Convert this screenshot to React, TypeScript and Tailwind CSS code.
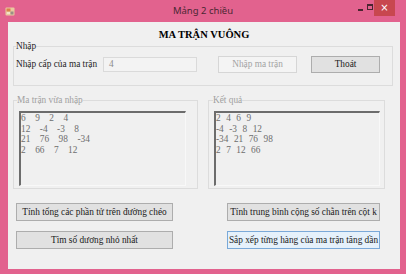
import React from "react";

function WinButton({
  children,
  className = "",
  variant = "normal",
}: {
  children: React.ReactNode;
  className?: string;
  variant?: "normal" | "disabled" | "focus";
}) {
  const styles =
    variant === "disabled"
      ? "bg-[#f4f4f4] border-[#d6d6d6] text-[#a3a3a3]"
      : variant === "focus"
      ? "bg-[#e5f1fb] border-[#7aa9d8] text-[#1a1a1a]"
      : "bg-[#e1e1e1] border-[#adadad] text-[#1a1a1a]";
  return (
    <div
      className={`flex items-center justify-center border text-[9.3px] leading-[11px] whitespace-nowrap ${styles} ${className}`}
    >
      {children}
    </div>
  );
}

function MatrixBox({ rows, gapClass, className = "" }: { rows: string[][]; gapClass: string; className?: string }) {
  return (
    <div
      className={`h-[75px] border-t-2 border-l-2 border-r border-b border-t-[#6c6c6c] border-l-[#6c6c6c] border-r-[#f8f8f8] border-b-[#f8f8f8] bg-[#f0f0f0] ${className}`}
    >
      {rows.map((r, i) => (
        <div key={i} className="flex whitespace-nowrap text-[9.3px] leading-[10.7px] text-[#6d6d6d]">
          {r.map((n, j) => (
            <span key={j} className={j < r.length - 1 ? gapClass : ""}>
              {n}
            </span>
          ))}
        </div>
      ))}
    </div>
  );
}

export default function App() {
  const left = [
    ["6", "9", "2", "4"],
    ["12", "-4", "-3", "8"],
    ["21", "76", "98", "-34"],
    ["2", "66", "7", "12"],
  ];
  const right = [
    ["2", "4", "6", "9"],
    ["-4", "-3", "8", "12"],
    ["-34", "21", "76", "98"],
    ["2", "7", "12", "66"],
  ];
  return (
    <div className="w-[406px] h-[274px] bg-[#e2628e] flex flex-col font-['Liberation_Serif','Times_New_Roman',serif]">
      {/* Title bar */}
      <div className="h-[22px] flex items-start shrink-0">
        <div className="w-[51px] h-[22px] flex items-center pl-[5px]">
          <svg width="10" height="11" viewBox="0 0 10 11">
            <rect x="0.5" y="1.5" width="9" height="8" rx="1" fill="#e9c9a0" />
            <rect x="1.5" y="2.5" width="4" height="3" fill="#d9824a" />
            <rect x="5.5" y="5.5" width="3" height="3" fill="#9a8f86" />
            <rect x="2" y="6" width="3" height="2" fill="#f3e2c8" />
          </svg>
        </div>
        <div className="flex-1 h-[22px] flex items-center justify-center text-[9.5px] text-[#4b2733] font-['Noto_Sans','Open_Sans',sans-serif]">
          Mảng 2 chiều
        </div>
        <div className="w-[51px] h-[16px] flex items-start pr-[11px]">
          <div className="w-[10px] h-[16px] flex items-center justify-center">
            <div className="w-[5px] h-[2px] bg-[#4a2530] mt-[3px]" />
          </div>
          <div className="w-[9px] h-[16px] flex items-center justify-center">
            <div className="w-[6px] h-[6px] border border-[#4a2530] border-t-2 -mt-[3px]" />
          </div>
          <div className="w-[21px] h-[16px] bg-[#c8474f] flex items-center justify-center text-white text-[10px] leading-none font-['DejaVu_Sans',sans-serif]">
            ×
          </div>
        </div>
      </div>

      {/* Client area */}
      <div className="flex-1 ml-[8px] mr-[6px] mb-[5px] bg-[#f0f0f0] flex flex-col">
        <div className="pt-[7px] h-[19px] text-center font-bold text-[10.5px] leading-[12px] text-black">
          MA TRẬN VUÔNG
        </div>

        <fieldset className="ml-[5px] w-[380px] h-[45px] border border-[#dcdcdc] pl-[2px] pr-0 pb-0 m-0 min-w-0">
          <legend className="text-[9.3px] leading-[11px] text-[#1e1e1e] p-0">Nhập</legend>
          <div className="flex items-center pt-[4px]">
            <div className="w-[87px] h-[17px] flex items-center text-[9.3px] leading-[11px] text-[#1e1e1e] whitespace-nowrap">
              Nhập cấp của ma trận
            </div>
            <div className="w-[94px] h-[15px] border border-[#dadada] bg-[#f3f3f3] flex items-center pl-[5px] text-[9.3px] leading-[11px] text-[#8a8a8a]">
              4
            </div>
            <WinButton variant="disabled" className="ml-[21px] w-[79px] h-[17px]">
              Nhập ma trận
            </WinButton>
            <WinButton className="ml-[14px] w-[69px] h-[17px]">Thoát</WinButton>
          </div>
        </fieldset>

        <div className="flex items-start mt-[9px]">
          <fieldset className="ml-[5px] w-[185px] h-[94px] border border-[#dcdcdc] pl-[3px] pr-0 pb-0 m-0 min-w-0">
            <legend className="text-[9.3px] leading-[11px] text-[#a0a0a0] p-0">Ma trận vừa nhập</legend>
            <MatrixBox rows={left} gapClass="mr-[9.5px]" className="ml-[2px] mt-[5px] w-[167px]" />
          </fieldset>
          <fieldset className="ml-[10px] w-[177px] h-[94px] border border-[#dcdcdc] pl-[4px] pr-0 pb-0 m-0 min-w-0">
            <legend className="text-[9.3px] leading-[11px] text-[#a0a0a0] p-0">Kết quả</legend>
            <MatrixBox rows={right} gapClass="mr-[5.5px]" className="ml-[1px] mt-[5px] w-[166px]" />
          </fieldset>
        </div>

        <div className="flex mt-[14px]">
          <WinButton className="ml-[8px] w-[157px] h-[18px]">Tính tổng các phần tử trên đường chéo</WinButton>
          <WinButton className="ml-[54px] w-[153px] h-[18px]">Tính trung bình cộng số chẵn trên cột k</WinButton>
        </div>
        <div className="flex mt-[10px]">
          <WinButton className="ml-[8px] w-[157px] h-[18px]">Tìm số dương nhỏ nhất</WinButton>
          <WinButton variant="focus" className="ml-[54px] w-[153px] h-[18px]">
            Sắp xếp từng hàng của ma trận tăng dần
          </WinButton>
        </div>
      </div>
    </div>
  );
}
